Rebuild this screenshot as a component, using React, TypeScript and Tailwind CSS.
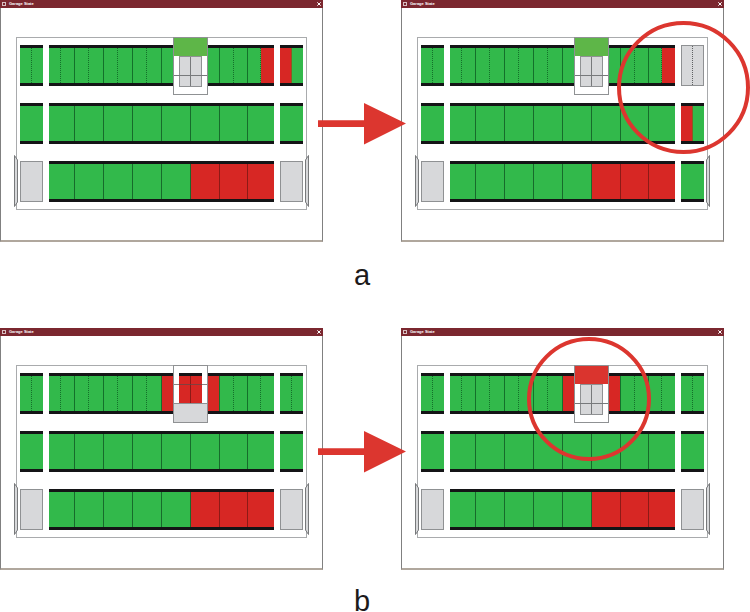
import React from "react";

type Tone = "free" | "taken";
type SideKind = "green" | "split" | "gray" | "graySplit" | "redLeft";

const tone: Record<Tone, string> = {
  free: "bg-[#32b94b]",
  taken: "bg-[#d72724]",
};

const rails = "border-y-3 border-[#141416]";
const dotted = "border-r border-dotted border-r-[#14702a]";
const solid = "border-r border-solid border-[#14702a]";

/* A narrow bay at either end of a row. */
function SideBay({ kind }: { kind: SideKind }) {
  if (kind === "gray" || kind === "graySplit") {
    return (
      <div className="flex h-[41px] border border-[#8f9193] bg-[#d7d8da]">
        <div
          className={
            kind === "graySplit" ? "w-1/2 border-r border-dotted border-[#5f6163]" : "w-1/2"
          }
        />
      </div>
    );
  }
  return (
    <div className={`flex h-[41px] bg-[#32b94b] ${rails}`}>
      {kind === "split" && <div className={`w-1/2 ${dotted}`} />}
      {kind === "redLeft" && (
        <div className="w-1/2 border-r border-[#8a5a22] bg-[#d72724]" />
      )}
    </div>
  );
}

const columns = "grid grid-cols-[26fr_29fr_29fr_29fr_29fr_29fr_28fr_26fr]";

/* Long bay with eight full-width spaces. */
function WideRow({ taken = 0 }: { taken?: number }) {
  return (
    <div className={`h-[41px] ${columns} ${rails}`}>
      {Array.from({ length: 8 }, (_, i) => {
        const red = i >= 8 - taken;
        return (
          <div
            key={i}
            className={`${red ? tone.taken : tone.free} ${
              i === 7 ? "" : red ? "border-r border-[#8c1a16]" : "border-r border-[#176b2b]"
            }`}
          />
        );
      })}
    </div>
  );
}

/* Long bay where every space is halved; taken halves are listed by index. */
function HalfRow({ taken }: { taken: number[] }) {
  return (
    <div className={`h-[41px] ${columns} ${rails}`}>
      {Array.from({ length: 8 }, (_, i) => (
        <div
          key={i}
          className={`grid ${i === 0 ? "grid-cols-[12fr_14fr]" : "grid-cols-2"} ${
            i === 7 ? "" : solid
          }`}
        >
          <div className={`${dotted} ${taken.includes(i * 2) ? tone.taken : tone.free}`} />
          <div className={taken.includes(i * 2 + 1) ? tone.taken : tone.free} />
        </div>
      ))}
    </div>
  );
}

function Lift({ state }: { state: "green" | "red" | "lowered" }) {
  const frame =
    "absolute -top-px left-[54%] h-[58px] w-[35px] border border-[#8f9193]";
  if (state === "lowered") {
    return (
      <div className={`${frame} flex flex-col bg-white`}>
        <div className="flex h-[37px] justify-center pt-[7px]">
          <div className="flex w-[23px] border-t-3 border-[#141416] bg-[#d72724]">
            <div className="w-1/2 border-r border-[#8c1a16]" />
          </div>
        </div>
        <div className="flex-1 border-t border-[#8f9193] bg-[#d7d8da]" />
        <div className="absolute inset-x-0 top-[18px] h-px bg-[#5c4a4a]/70" />
      </div>
    );
  }
  return (
    <div className={`${frame} bg-white`}>
      <div
        className={`h-[18px] ${state === "green" ? "bg-[#5eb648]" : "bg-[#da342e]"}`}
      />
      <div className="mx-auto flex h-[31px] w-[23px] border border-[#8f9193] bg-[#d7d8da]">
        <div className="w-1/2 border-r border-[#77797b]" />
      </div>
      <div className="absolute inset-x-0 top-[37px] h-px bg-[#77797b]" />
    </div>
  );
}

function Gate({ side }: { side: "left" | "right" }) {
  return (
    <svg
      aria-hidden="true"
      viewBox="0 0 4 52"
      className={
        side === "left"
          ? "absolute -left-[3px] bottom-[2px] h-[52px] w-[4px]"
          : "absolute -right-[3px] bottom-[2px] h-[52px] w-[4px] -scale-x-100"
      }
    >
      <path d="M.5 .5L3.5 5V47L.5 51.5Z" fill="#d7d8da" stroke="#77797b" strokeWidth="1" />
    </svg>
  );
}

interface GarageProps {
  lift: "green" | "red" | "lowered";
  topTaken: number[];
  right: [SideKind, SideKind, SideKind];
  children?: React.ReactNode;
}

function GarageWindow({ lift, topTaken, right, children }: GarageProps) {
  return (
    <section className="relative min-w-0 flex-1">
      <header className="flex h-[8px] items-center justify-between bg-[#7b272f] px-[2px] text-white">
        <div className="flex items-center gap-[3px]">
          <span className="h-[4px] w-[4px] border border-white/70" />
          <h2 className="text-[4px] leading-[8px] font-bold">Garage State</h2>
        </div>
        <button type="button" aria-label="Close" className="flex size-[4px]">
          <svg viewBox="0 0 4 4" className="size-full">
            <path d="M.3 .3L3.7 3.7M3.7 .3L.3 3.7" stroke="white" strokeWidth="1" />
          </svg>
        </button>
      </header>
      <div className="border-x border-b-2 border-x-[#808080] border-b-[#b0a79d] px-[15px] pt-[29px] pb-[30px]">
        <div className="relative border border-[#a9abad] px-[3px] py-[7px]">
          <div className="grid grid-cols-[23fr_225fr_23fr] gap-x-[6px] gap-y-[17px]">
            <SideBay kind="split" />
            <HalfRow taken={topTaken} />
            <SideBay kind={right[0]} />
            <SideBay kind="green" />
            <WideRow />
            <SideBay kind={right[1]} />
            <SideBay kind="gray" />
            <WideRow taken={3} />
            <SideBay kind={right[2]} />
          </div>
          <Lift state={lift} />
          <Gate side="left" />
          <Gate side="right" />
        </div>
      </div>
      {children}
    </section>
  );
}

function Arrow() {
  return (
    <div className="relative z-10 w-[78px] shrink-0 pt-[103px]">
      <svg aria-hidden="true" viewBox="0 0 88 42" className="-ml-[5px] h-[42px] w-[88px] max-w-none">
        <path d="M0 17.3H46V0L88 20.6L46 41.5V24H0Z" fill="#dc362f" />
      </svg>
    </div>
  );
}

const caption = "pr-[26px] text-center text-[29px]";

export default function App() {
  return (
    <main className="bg-white font-['Liberation_Sans',Arial,sans-serif] text-[#1c1a1b]">
      <figure className="pb-[36px]">
        <div className="flex pr-[26px]">
          <GarageWindow lift="green" topTaken={[15]} right={["redLeft", "green", "gray"]} />
          <Arrow />
          <GarageWindow lift="green" topTaken={[15]} right={["graySplit", "redLeft", "green"]}>
            <div className="absolute top-[21px] -right-[26px] size-[133px] rounded-full border-4 border-[#dc362f]" />
          </GarageWindow>
        </div>
        <figcaption className={`${caption} pt-[16px] leading-[34px]`}>a</figcaption>
      </figure>
      <figure>
        <div className="flex pr-[26px]">
          <GarageWindow lift="lowered" topTaken={[8, 11]} right={["split", "green", "gray"]} />
          <Arrow />
          <GarageWindow lift="red" topTaken={[8, 11]} right={["split", "green", "gray"]}>
            <div className="absolute top-[9px] left-[39%] size-[124px] rounded-full border-4 border-[#dc362f]" />
          </GarageWindow>
        </div>
        <figcaption className={`${caption} pt-[20px] leading-[22px]`}>b</figcaption>
      </figure>
    </main>
  );
}
